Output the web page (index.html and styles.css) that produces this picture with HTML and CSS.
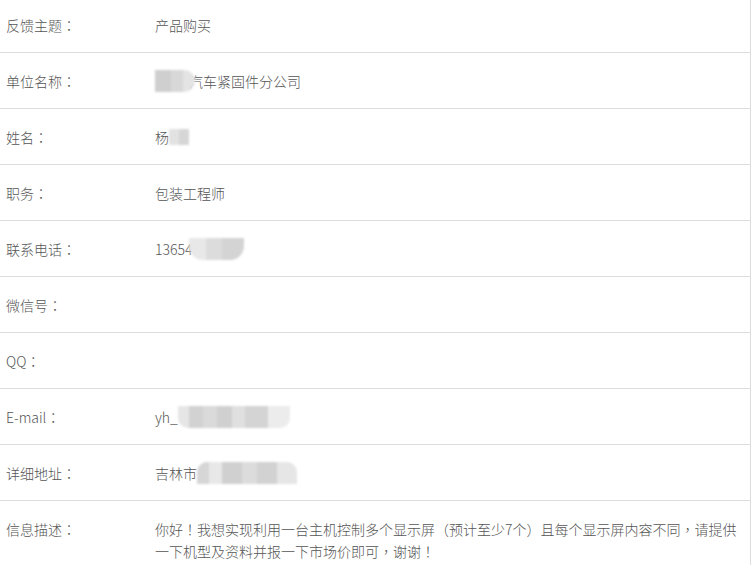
FILE: index.html
```html
<!DOCTYPE html>
<html lang="zh-CN">
<head>
<meta charset="utf-8">
<link rel="stylesheet" href="styles.css">
</head>
<body>
<div class="sheet">
  <div class="row"><div class="label">反馈主题<span class="p" lang="zh-TW">：</span></div><div class="value">产品购买</div></div>
  <div class="row"><div class="label">单位名称<span class="p" lang="zh-TW">：</span></div><div class="value"><span class="mask m-company"></span>汽车紧固件分公司</div></div>
  <div class="row"><div class="label">姓名<span class="p" lang="zh-TW">：</span></div><div class="value">杨<span class="mask m-name"></span></div></div>
  <div class="row"><div class="label">职务<span class="p" lang="zh-TW">：</span></div><div class="value">包装工程师</div></div>
  <div class="row"><div class="label">联系电话<span class="p" lang="zh-TW">：</span></div><div class="value">13654<span class="mask m-phone"></span></div></div>
  <div class="row"><div class="label">微信号<span class="p" lang="zh-TW">：</span></div><div class="value"></div></div>
  <div class="row"><div class="label">QQ<span class="p" lang="zh-TW">：</span></div><div class="value"></div></div>
  <div class="row"><div class="label">E-mail<span class="p" lang="zh-TW">：</span></div><div class="value">yh_<span class="mask m-mail"></span></div></div>
  <div class="row"><div class="label">详细地址<span class="p" lang="zh-TW">：</span></div><div class="value">吉林市<span class="mask m-addr"></span></div></div>
  <div class="row"><div class="label">信息描述<span class="p" lang="zh-TW">：</span></div><div class="value desc">你好<span class="p" lang="zh-TW">！</span>我想实现利用一台主机控制多个显示屏<span class="p" lang="zh-TW">（</span>预计至少7个<span class="p" lang="zh-TW">）</span>且每个显示屏内容不同<span class="p" lang="zh-TW">，</span>请提供一下机型及资料并报一下市场价即可<span class="p" lang="zh-TW">，</span>谢谢<span class="p" lang="zh-TW">！</span></div></div>
</div>
</body>
</html>
```
FILE: styles.css
```css
html, body {
  margin: 0;
  padding: 0;
  background: #fff;
}
body {
  font-family: "Noto Sans CJK SC", "Microsoft YaHei", sans-serif;
  font-size: 14px;
  font-weight: 300;
  color: #555;
  overflow: hidden;
}
.sheet {
  width: 750px;
  border-right: 1px solid #ddd;
  margin-top: -3px;
}
.row {
  display: flex;
  border-bottom: 1px solid #ddd;
  padding: 17px 0 16px;
  line-height: 22px;
  min-height: 22px;
}
.label {
  width: 149px;
  padding-left: 6px;
  flex: none;
}
.value {
  flex: 1;
  padding-right: 12px;
}
.p {
  font-family: "Noto Sans CJK TC", "Noto Sans CJK SC", sans-serif;
}
.mask {
  display: inline-block;
  vertical-align: top;
  height: 22px;
  filter: blur(1.2px);
  position: relative;
  z-index: 1;
}
.m-company {
  width: 40px;
  margin-right: -6px;
  border-radius: 0 12px 12px 0;
  background: linear-gradient(90deg, #cfcfcf 0 40%, #d8d8d8 40% 70%, #e4e4e4 70%);
}
.m-name {
  width: 20px;
  height: 16px;
  margin-top: 3px;
  background: linear-gradient(90deg, #e2e2e2 0 50%, #d6d6d6 50%);
}
.m-phone {
  width: 55px;
  margin-left: -3px;
  border-radius: 0 0 14px 14px;
  background: linear-gradient(90deg, #e8e8e8 0 30%, #dcdcdc 30% 60%, #d4d4d4 60%);
}
.m-mail {
  width: 112px;
  border-radius: 0 0 10px 10px;
  background: linear-gradient(90deg, #e6e6e6 0 10%, #d2d2d2 10% 22%, #dadada 22% 35%, #d0d0d0 35% 48%, #e0e0e0 48% 60%, #d4d4d4 60% 80%, #ececec 80%);
}
.m-addr {
  width: 100px;
  border-radius: 10px 10px 0 0;
  background: linear-gradient(90deg, #d6d6d6 0 12%, #e8e8e8 12% 25%, #d0d0d0 25% 45%, #dcdcdc 45% 60%, #d2d2d2 60% 80%, #e6e6e6 80%);
}
```
